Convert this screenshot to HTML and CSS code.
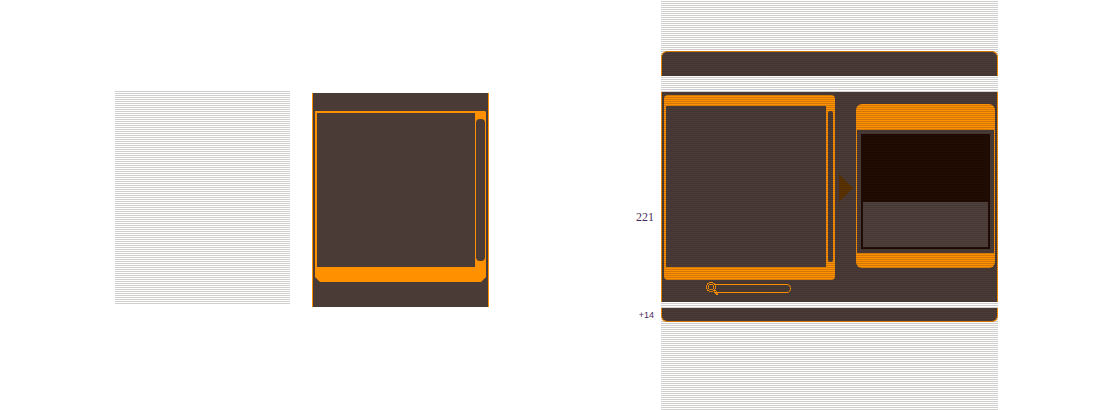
FILE: index.html
```html
<!DOCTYPE html>
<html lang="en">
<head>
<meta charset="utf-8">
<title>Panel skin</title>
<link rel="stylesheet" href="styles.css">
</head>
<body>
<main class="sheet">
  <div class="scanlines"></div>
  <section class="plain">
    <div class="list">
      <div class="list-view"></div>
      <div class="list-scroll"><div class="track"></div></div>
    </div>
  </section>
  <div class="labels">
    <label class="size" for="find">221</label>
    <span class="extra">+14</span>
  </div>
  <section class="skin">
    <div class="cap cap-top"></div>
    <div class="body">
      <div class="browser">
        <div class="browser-view"></div>
        <div class="browser-scroll"></div>
      </div>
      <svg class="arrow" viewBox="0 0 14 28"><path d="M0 0L14 14L0 28Z"/></svg>
      <div class="card">
        <div class="card-inner">
          <div class="screen"><div class="caption"></div></div>
        </div>
      </div>
      <form class="search">
        <svg class="lens" viewBox="0 0 14 14" shape-rendering="crispEdges"><path d="M3 0h4v1h-4zM1 1h2v1h-2zM7 1h2v1h-2zM1 2h1v1h-1zM8 2h1v1h-1zM0 3h1v4h-1zM9 3h1v4h-1zM1 7h1v2h-1zM8 7h1v2h-1zM2 8h1v1h-1zM7 8h1v1h-1zM3 9h4v1h-4zM3 2h4v1h-4zM2 3h1v4h-1zM7 3h1v4h-1zM3 7h4v1h-4zM9 8h1v1h-1zM8 9h1v1h-1zM10 9h1v1h-1zM9 10h1v1h-1zM11 10h1v1h-1zM8 10h1v1h-1zM10 11h1v1h-1zM9 11h1v1h-1zM10 12h2v1h-2zM11 11h1v1h-1z"/></svg>
        <input class="field" id="find" type="text" aria-label="Search">
      </form>
    </div>
    <div class="cap cap-bottom"></div>
  </section>
</main>
</body>
</html>
```
FILE: styles.css
```css
:root {
  --brown: #4b3b37;
  --orange: #ff9000;
  --line: rgba(40, 30, 26, 0.22);
}

* { box-sizing: border-box; }

body { margin: 0; background: #fff; }

.sheet {
  display: grid;
  grid-template-columns: 115fr 175fr 22fr 177fr 172fr 337fr 99fr;
  min-height: 100vh;
}

.scanlines {
  grid-column: 2;
  height: 213px;
  margin-top: 91px;
  background: repeating-linear-gradient(#d0cfcd 0 1px, #fff 1px 2px);
}

.plain {
  grid-column: 4;
  align-self: start;
  margin-top: 93px;
  padding: 18px 2px 25px;
  border: solid var(--orange);
  border-width: 0 1px;
  background: var(--brown);
}

.list {
  display: flex;
  padding: 2px 1px 15px 2px;
  background: var(--orange);
  clip-path: polygon(0 0, calc(100% - 1px) 0, 100% 1px, 100% calc(100% - 5px), calc(100% - 5px) 100%, 5px 100%, 0 calc(100% - 5px));
}

.list-view { flex: 1; height: 154px; background: var(--brown); }

.list-scroll { width: 10px; padding: 6px 0 6px 1px; }

.track { height: 142px; border-radius: 4px; background: var(--brown); }

.labels {
  grid-column: 5;
  display: flex;
  flex-direction: column;
  align-items: flex-end;
  gap: 84px;
  padding: 210px 7px 0 0;
  color: #4b2a5c;
}

.size { font: 12px/14px "Liberation Serif", serif; }

.extra { font: 9px/14px "Liberation Sans", sans-serif; }

.skin {
  grid-column: 6;
  position: relative;
  padding-top: 51px;
}

.skin::after {
  content: "";
  position: absolute;
  inset: 0;
  background: repeating-linear-gradient(transparent 0 1px, var(--line) 1px 2px);
  pointer-events: none;
}

.cap { border: 1px solid var(--orange); background: var(--brown); }

.cap-top { height: 25px; border-bottom: 0; border-radius: 6px 6px 0 0; }

.cap-bottom { height: 14px; border-top: 0; border-radius: 0 0 6px 6px; }

.body {
  display: grid;
  grid-template-columns: 1fr 13px 139px;
  column-gap: 4px;
  margin: 16px 0 6px;
  padding: 3px 2px 6px;
  border: solid var(--orange);
  border-width: 0 1px;
  background: var(--brown);
}

.browser {
  display: flex;
  gap: 2px;
  padding: 11px 2px 13px;
  border-radius: 4px;
  background: var(--orange);
}

.browser-view { flex: 1; height: 161px; background: var(--brown); }

.browser-scroll {
  width: 5px;
  margin: 5px 0;
  border-radius: 2px;
  background: var(--brown);
}

.arrow { width: 14px; height: 28px; align-self: center; fill: #5c3300; }

.card {
  align-self: start;
  margin-top: 9px;
  padding: 26px 1px 15px;
  border-radius: 6px;
  background: var(--orange);
}

.card-inner { padding: 4px; background: var(--brown); }

.screen { padding: 68px 2px 2px; background: #1e0900; }

.caption { height: 45px; background: #4f403b; }

.search {
  display: flex;
  align-items: flex-start;
  margin: 2px 0 0 42px;
}

.lens {
  width: 14px;
  height: 14px;
  margin-right: -5px;
  fill: var(--orange);
}

.field {
  width: 76px;
  height: 9px;
  margin-top: 2px;
  padding: 0 5px;
  border: 1px solid var(--orange);
  border-left: 0;
  border-radius: 0 5px 5px 0;
  background: transparent;
  color: var(--orange);
  font: 7px/7px "Liberation Sans", sans-serif;
  outline: none;
}
```
